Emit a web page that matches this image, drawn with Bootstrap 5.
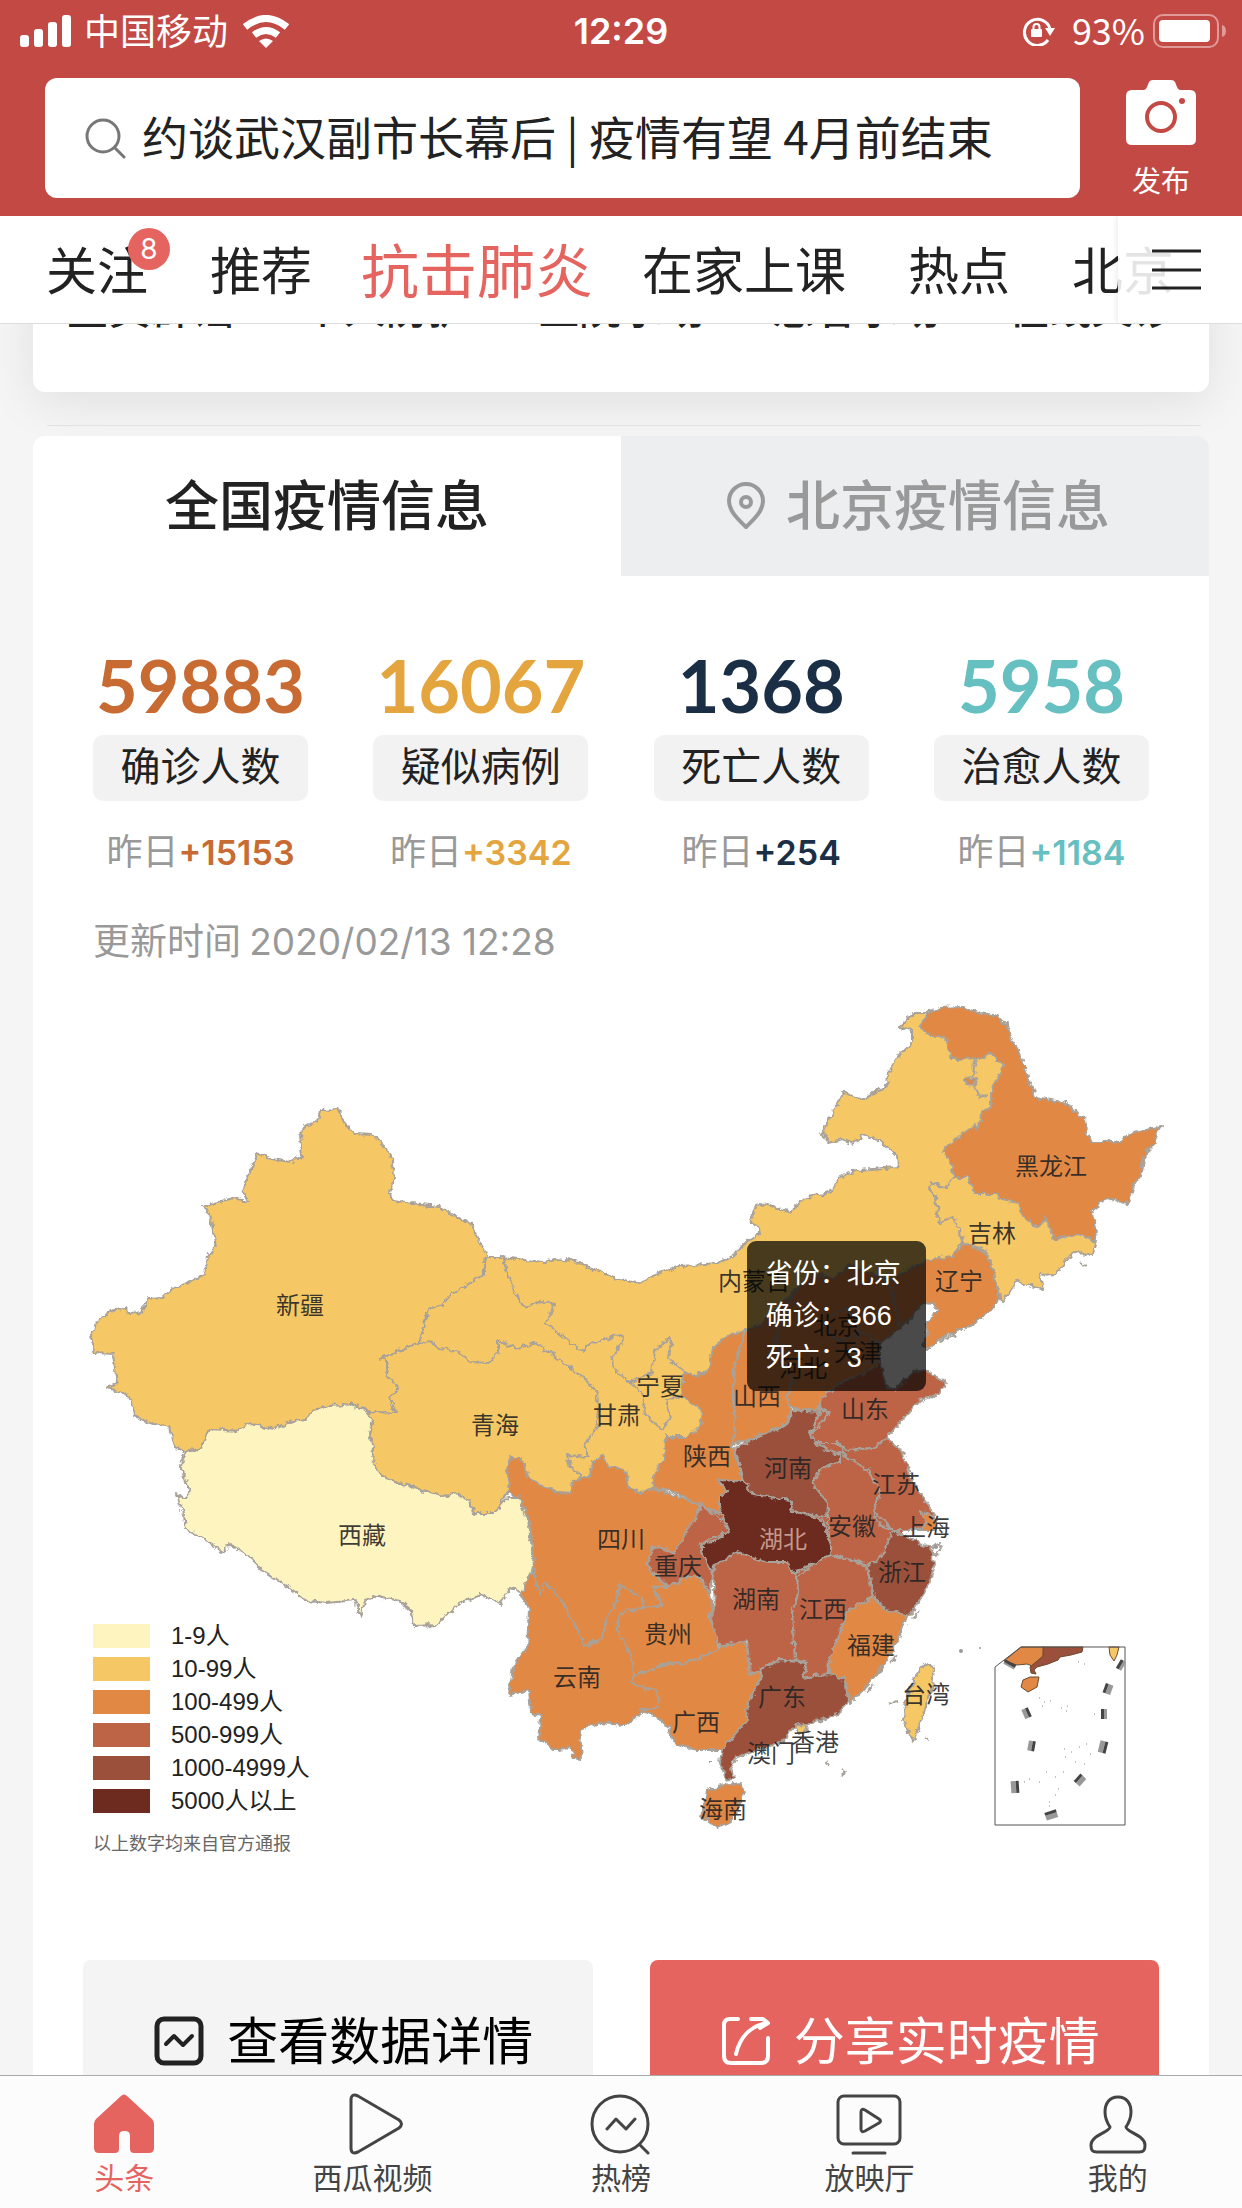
<!DOCTYPE html>
<html lang="zh-CN">
<head>
<meta charset="utf-8">
<meta name="viewport" content="width=device-width, initial-scale=1">
<title>抗击肺炎</title>
<link rel="stylesheet" href="https://cdn.jsdelivr.net/npm/bootstrap@5.3.0/dist/css/bootstrap.min.css">
<style>
  :root { --brand: #c24944; --accent: #e5645f; --ink: #222; --dim: #999; --cjk: "Noto Sans CJK SC", sans-serif; }
  body { font-family: var(--cjk); color: var(--ink); background: #f5f5f5; }
  button { font-family: inherit; }
  svg { display: block; flex: none; }
  .app { height: 100vh; }
  .topbar { background: var(--brand); }
  .statusbar { height: 62px; padding: 0 16px; font-size: 36px; line-height: 56px; }
  .statusbar span { padding-bottom: 4px; }
  .statusbar .clock { padding-bottom: 0; }
  .carrier { margin: 0 15px 0 13px; }
  .latin { font-family: Inter, sans-serif; }
  .clock { font-weight: 600; font-size: 36px; }
  .searchrow { padding: 16px 0 18px 45px; }
  .searchbox { height: 120px; border-radius: 12px; padding: 0 40px; gap: 16px; }
  .searchbox input { font-size: 46px; color: var(--ink); outline: 0; min-width: 0; padding: 0 0 5px; }
  .post { width: 162px; gap: 14px; font-size: 29px; line-height: 36px; }
  .post svg { margin-top: 1px; }
  .channels { height: 108px; border-bottom: 1px solid #dedede; }
  .channels ul { gap: 62px; padding-left: 46px; font-size: 51px; line-height: 104px; }
  .channels a { color: var(--ink); }
  .channels .current { font-size: 58px; color: var(--accent); margin: 0 -13px; }
  .count { width: 42px; height: 42px; line-height: 42px; font-size: 28px; background: var(--accent); left: 82px; top: 12px; }
  .more { width: 124px; background: rgba(255,255,255,.88); box-shadow: -2px 0 5px rgba(0,0,0,.07); padding-right: 41px; }
  .feed { padding: 0 33px; min-height: 0; }
  .panel { border-radius: 12px; }
  .shortcuts { margin-top: -48px; padding-bottom: 56px; font-size: 42px; line-height: 60px; font-weight: 500; box-shadow: 0 10px 50px rgba(0,0,0,.09); }
  .shortcuts a { color: var(--ink); flex: 1 1 0; }
  .rule { margin: 33px 8px 10px 14px; border-top: 1px solid #e2e2e2; }
  .scope button { height: 140px; font-size: 54px; font-weight: 500; color: var(--ink); padding: 0 0 7px; }
  .scope .off { background: #eceef0; color: var(--dim); gap: 20px; padding-left: 6px; }
  .scope svg { margin-top: 7px; }
  .figures { padding: 73px 60px 0; }
  .figure-cell { width: 215px; }
  .total { font: 700 72px/72px Lato, sans-serif; }
  .pill { background: #f2f2f2; border-radius: 10px; font-size: 40px; line-height: 58px; padding-bottom: 8px; margin-top: 14px; }
  .delta { font-size: 36px; line-height: 42px; margin-top: 27px; color: var(--dim); }
  .delta b { font: 600 34px/42px Inter, sans-serif; }
  .c1 { color: #c76b33; } .c2 { color: #e4a43e; } .c3 { color: #1a2f45; } .c4 { color: #66bfc0; }
  .updated { font-size: 37px; line-height: 42px; margin-top: 44px; padding-left: 60px; color: var(--dim); }
  .updated time { font-family: Inter, sans-serif; font-size: 37px; }
  .atlas text { font-family: "Noto Sans CJK SC", sans-serif; font-size: 24px; text-anchor: middle; fill: #222; fill-opacity: .88; }
  .atlas .pale { fill: #d3a99c; }
  .l1 { fill: #fdf4bf; } .l2 { fill: #f6c765; } .l3 { fill: #e18845; } .l4 { fill: #bd6447; } .l5 { fill: #9b503c; } .l6 { fill: #6c2b1e; }
  .legend { left: 60px; bottom: 6px; font: 24px/33px "Liberation Sans", "Noto Sans CJK SC", sans-serif; }
  .legend li { gap: 21px; }
  .swatch { width: 57px; height: 24px; }
  .k1 { background: #fdf4bf; } .k2 { background: #f6c765; } .k3 { background: #e18845; } .k4 { background: #bd6447; } .k5 { background: #9b503c; } .k6 { background: #6c2b1e; }
  .source { font: 18px/24px var(--cjk); color: #666; margin-top: 13px; }
  .tip { left: 60.7%; top: 31%; background: rgba(0,0,0,.71); border-radius: 9px; padding: 12px 19px; width: 179px; font: 27px/42px "Liberation Sans", "Noto Sans CJK SC", sans-serif; }
  .actions { padding: 100px 50px 0; gap: 57px; }
  .actions button { height: 162px; border-radius: 8px; font-size: 51px; flex: 1 1 0; gap: 23px; padding: 0 0 6px 12px; }
  .actions svg { margin-top: 6px; }
  .details { background: #f4f4f4; color: #000; }
  .share { background: var(--accent); }
  .tabbar { height: 133px; border-top: 1px solid #aaa; background: #fcfcfc; }
  .tabbar a { flex: 1 1 0; color: #444; font-size: 30px; line-height: 40px; padding-top: 17px; }
  .tabbar svg { margin-bottom: 1px; }
  .tabbar .here { color: var(--accent); }
</style>
<script src="https://cdn.jsdelivr.net/npm/bootstrap@5.3.0/dist/js/bootstrap.bundle.min.js"></script>
</head>
<body>
<div class="app d-flex flex-column overflow-hidden">

  <header class="topbar text-white flex-shrink-0">
    <div class="statusbar d-flex align-items-center">
      <div class="d-flex align-items-center flex-fill w-25 ps-1">
        <svg width="51" height="32" viewBox="0 0 51 32" fill="#fff"><rect y="20" width="9" height="12" rx="3"/><rect x="14" y="14" width="9" height="18" rx="3"/><rect x="28" y="7" width="9" height="25" rx="3"/><rect x="42" width="9" height="32" rx="3"/></svg>
        <span class="carrier">中国移动</span>
        <svg width="46" height="33" viewBox="0 0 46 33" fill="none" stroke="#fff" stroke-width="7"><path d="M2 12Q23-5 44 12M11 20q12-9 24 0"/><path d="M23 33l-7-7q7-5 14 0z" fill="#fff" stroke="none"/></svg>
      </div>
      <span class="clock latin">12:29</span>
      <div class="d-flex align-items-center justify-content-end flex-fill w-25">
        <svg width="34" height="30" viewBox="0 0 34 30" fill="none" stroke="#fff" stroke-width="3"><path d="M26 24A13 13 0 1 1 28 13"/><path d="M23 12h10l-5 8z" fill="#fff" stroke="none"/><rect x="9" y="13" width="11" height="8" rx="1" fill="#fff" stroke="none"/><path d="M11.500 14v-3a3 3 0 0 1 6 0v3" stroke-width="2"/></svg>
        <span class="ms-3 me-2">93%</span>
        <svg width="73" height="34" viewBox="0 0 73 34"><rect x="1" y="1" width="64" height="32" rx="9" fill="none" stroke="#e09a97" stroke-width="2"/><rect x="6" y="6" width="51" height="22" rx="4" fill="#fff"/><path d="M69 11q4 1 4 6t-4 6z" fill="#e09a97"/></svg>
      </div>
    </div>
    <div class="searchrow d-flex">
      <label class="searchbox bg-white d-flex align-items-center flex-fill">
        <svg width="41" height="41" viewBox="0 0 41 41" fill="none" stroke="#777" stroke-width="3" stroke-linecap="round"><circle cx="18" cy="18" r="16"/><path d="M30 30l9 9"/></svg>
        <input class="border-0 flex-fill bg-transparent" type="text" aria-label="搜索" value="约谈武汉副市长幕后 | 疫情有望 4月前结束">
      </label>
      <button class="post btn p-0 border-0 text-white d-flex flex-column align-items-center" type="button">
        <svg width="70" height="68" viewBox="0 0 70 68"><path d="M6 11h12q2 0 3-3l2-5q1-2 4-2h18q3 0 4 2l2 5q1 3 3 3h10q6 0 6 6v43q0 6-6 6H6q-6 0-6-6V17q0-6 6-6z" fill="#fff"/><circle cx="35" cy="38" r="14" fill="none" stroke="#c24944" stroke-width="4"/><circle cx="56" cy="22" r="3" fill="#c24944"/></svg>
        <span>发布</span>
      </button>
    </div>
  </header>

  <nav class="channels bg-white position-relative overflow-hidden flex-shrink-0">
    <ul class="list-unstyled d-flex text-nowrap m-0">
      <li class="position-relative"><a class="text-decoration-none" href="#">关注</a><span class="count position-absolute rounded-circle text-white text-center latin">8</span></li>
      <li><a class="text-decoration-none" href="#">推荐</a></li>
      <li class="current"><a class="text-decoration-none text-reset" href="#">抗击肺炎</a></li>
      <li><a class="text-decoration-none" href="#">在家上课</a></li>
      <li><a class="text-decoration-none" href="#">热点</a></li>
      <li><a class="text-decoration-none" href="#">北京</a></li>
    </ul>
    <button class="more btn border-0 rounded-0 position-absolute top-0 end-0 h-100 d-flex align-items-center justify-content-end" type="button" aria-label="全部频道">
      <svg width="49" height="41" viewBox="0 0 49 41" stroke="#222" stroke-width="3"><path d="M0 2h49M0 21h49M0 39h49"/></svg>
    </button>
  </nav>

  <main class="feed flex-fill overflow-hidden">
    <div class="shortcuts panel bg-white d-flex text-center">
      <a class="text-decoration-none" href="#">鉴真辟谣</a><a class="text-decoration-none" href="#">个人防护</a><a class="text-decoration-none" href="#">医院求助</a><a class="text-decoration-none" href="#">患者求助</a><a class="text-decoration-none" href="#">在线义诊</a>
    </div>
    <div class="rule"></div>

    <section class="panel bg-white overflow-hidden">
      <div class="scope d-flex">
        <button class="btn border-0 rounded-0 w-50" type="button">全国疫情信息</button>
        <button class="off btn border-0 rounded-0 w-50 d-flex align-items-center justify-content-center" type="button">
          <svg width="40" height="48" viewBox="0 0 40 48" fill="none" stroke="#999" stroke-width="4"><path d="M20 45C14 39 3 30 3 19a17 17 0 0 1 34 0c0 11-11 20-17 26z" stroke-linejoin="round"/><circle cx="20" cy="20" r="5"/></svg>
          北京疫情信息
        </button>
      </div>

      <div class="figures d-flex justify-content-between text-center">
        <div class="figure-cell"><div class="total c1">59883</div><div class="pill">确诊人数</div><div class="delta">昨日<b class="c1">+15153</b></div></div>
        <div class="figure-cell"><div class="total c2">16067</div><div class="pill">疑似病例</div><div class="delta">昨日<b class="c2">+3342</b></div></div>
        <div class="figure-cell"><div class="total c3">1368</div><div class="pill">死亡人数</div><div class="delta">昨日<b class="c3">+254</b></div></div>
        <div class="figure-cell"><div class="total c4">5958</div><div class="pill">治愈人数</div><div class="delta">昨日<b class="c4">+1184</b></div></div>
      </div>
      <div class="updated">更新时间 <time datetime="2020-02-13T12:28">2020/02/13 12:28</time></div>

      <div class="position-relative">
        <svg class="atlas w-100 h-auto" viewBox="33 963 1176 897" role="img" aria-label="全国疫情地图">
          <defs>
            <filter id="coast" filterUnits="userSpaceOnUse" x="33" y="963" width="1176" height="897" color-interpolation-filters="sRGB">
              <feTurbulence type="fractalNoise" baseFrequency="0.16" numOctaves="3" seed="4"/>
              <feDisplacementMap in="SourceGraphic" scale="7" xChannelSelector="R" yChannelSelector="G"/>
            </filter>
          </defs>
          <g stroke="#a8a29a" stroke-width="2" stroke-linejoin="round" filter="url(#coast)">
            <!-- Inner Mongolia, Gansu and Ningxia share one tone -->
            <path class="l2" d="M489 1257L500 1257 543 1262 557 1259 580 1262 588 1268 600 1272 620 1279 639 1284 653 1276 680 1266 718 1263 735 1255 745 1243 759 1234 758 1229 751 1220 755 1206 768 1204 789 1212 807 1197 830 1193 840 1177 858 1170 898 1167 897 1157 880 1140 863 1135 853 1143 843 1139 828 1143 822 1133 843 1093 863 1099 887 1086 888 1073 902 1052 912 1042 912 1030 900 1027 913 1013 930 1013 960 1045 995 1040 1015 1070 1000 1120 960 1180 980 1240 940 1262 800 1380 700 1440 660 1500 560 1485 440 1347 418 1344 423 1330 428 1309 443 1305 447 1297 463 1287 483 1275 483 1262Z"/>
            <path class="l2" d="M320 1110L338 1109 343 1121 355 1134 373 1135 383 1144 393 1160 394 1182 389 1192 393 1201 413 1204 440 1207 465 1222 472 1223 477 1238 489 1257 483 1262 483 1275 463 1287 447 1297 443 1305 428 1309 423 1330 418 1344 393 1353 379 1359 387 1360 387 1375 399 1389 390 1398 396 1413 368 1412 353 1404 332 1406 313 1410 307 1419 290 1422 273 1429 250 1423 237 1431 210 1429 200 1449 185 1452 173 1446 169 1427 150 1423 135 1416 132 1400 123 1392 107 1388 117 1383 113 1354 95 1353 91 1336 97 1321 113 1310 127 1309 130 1314 142 1312 147 1298 163 1297 173 1289 205 1274 208 1255 216 1248 210 1214 202 1207 233 1198 248 1201 243 1191 257 1153 273 1159 290 1162 302 1156 300 1135 304 1126 318 1122Z"/>
            <path class="l2" d="M418 1344L430 1341 437 1347 460 1353 470 1362 490 1363 498 1353 498 1341 518 1348 535 1343 553 1355 567 1365 583 1377 597 1393 599 1410 597 1427 585 1443 588 1457 567 1455 570 1467 582 1475 572 1482 570 1493 555 1492 540 1485 528 1477 507 1493 495 1513 473 1513 470 1502 457 1493 447 1496 420 1490 400 1483 382 1476 372 1460 373 1448 369 1434 373 1419 368 1412 396 1413 390 1398 399 1389 387 1375 387 1360 379 1359Z"/>
            <path class="l1" d="M185 1452L200 1449 210 1429 237 1431 250 1423 273 1429 290 1422 307 1419 313 1410 332 1406 353 1404 368 1412 373 1419 369 1434 373 1448 372 1460 382 1476 400 1483 420 1490 447 1496 457 1493 470 1502 473 1513 495 1513 507 1498 520 1498 528 1520 534 1563 530 1580 528 1595 510 1588 500 1604 480 1594 460 1603 450 1612 437 1625 414 1626 412 1612 400 1601 373 1595 365 1601 360 1617 355 1600 327 1603 307 1601 293 1591 278 1580 263 1571 247 1555 230 1544 223 1552 203 1538 185 1528 182 1509 176 1494 187 1498 190 1491 181 1469 182 1459Z"/>
            <path fill="none" d="M502 1257L513 1287 523 1307 543 1301 555 1305 545 1323 567 1340 582 1352 590 1343 622 1334 623 1342 612 1358 617 1373 632 1382 652 1373 655 1350 670 1337 672 1345 668 1358 685 1372M627 1380L642 1393 645 1415 663 1430 671 1417 665 1400 681 1395"/>
            <!-- ground tone below the central and eastern provinces -->
            <path class="l4" stroke="none" d="M700 1520L745 1440 820 1400 850 1400 880 1430 890 1470 905 1520 895 1580 850 1640 830 1665 760 1665 725 1600Z"/>
            <path class="l2" d="M953 1177L946 1189 930 1182 929 1188 936 1197 939 1223 953 1217 960 1230 962 1242 985 1250 993 1270 1000 1297 1001 1302 1010 1293 1017 1281 1043 1290 1040 1275 1056 1274 1072 1253 1093 1254 1096 1240 1060 1200 1000 1170Z"/>
            <path class="l3" d="M928 1013L940 1008 962 1007 980 1013 995 1015 1007 1025 1010 1037 1018 1050 1025 1068 1035 1097 1067 1103 1078 1115 1085 1117 1087 1132 1092 1142 1117 1142 1130 1133 1162 1126 1157 1133 1156 1143 1145 1153 1142 1173 1133 1187 1128 1204 1107 1198 1092 1209 1096 1227 1095 1242 1078 1233 1055 1239 1045 1218 1038 1227 1022 1215 1019 1202 1000 1199 997 1194 975 1194 968 1177 953 1177 952 1165 943 1151 957 1138 975 1124 978 1130 982 1112 991 1108 991 1090 1004 1067 991 1052 980 1058 953 1059 948 1052 945 1037 930 1035 920 1028Z"/>
            <path fill="none" d="M975 1058L973 1077 978 1097 988 1095"/><path class="l3" d="M965 1078L976 1077 974 1086 968 1085Z"/>
            <path class="l3" d="M962 1243L985 1252 993 1270 1000 1297 993 1308 973 1325 947 1335 928 1348 923 1347 927 1333 925 1328 938 1310 933 1303 923 1302 912 1317 897 1330 885 1310 890 1280 913 1267 932 1259 953 1256Z"/>
            <path class="l3" d="M793 1293L812 1274 835 1277 850 1266 868 1272 890 1282 900 1328 880 1343 880 1363 860 1377 840 1385 820 1405 817 1412 790 1408 787 1397 793 1380 775 1340Z"/>
            <path class="l3" d="M830 1316l16-8 12 10-2 16-16 8-12-8z"/><path class="l3" d="M858 1332l12 4 10 10-4 16-16 2-6-16z"/>
            <path class="l3" d="M745 1330L735 1362 733 1393 735 1427 732 1445 763 1435 787 1423 790 1407 787 1397 793 1380 775 1340 793 1293 760 1325Z"/>
            <path class="l3" d="M745 1330L730 1335 713 1348 707 1372 692 1376 685 1372 681 1385 683 1397 702 1410 700 1428 687 1437 665 1437 664 1460 652 1477 653 1487 673 1492 700 1505 717 1513 740 1510 743 1481 738 1463 732 1445 735 1427 733 1393 735 1362Z"/>
            <path class="l3" d="M529 1577L521 1595 529 1610 527 1648 513 1667 509 1695 529 1690 531 1713 542 1715 538 1737 554 1750 570 1747 574 1758 582 1759 580 1730 599 1723 625 1725 644 1712 658 1707 690 1690 690 1640 660 1590 540 1560Z"/>
            <path class="l3" d="M620 1613L643 1608 662 1605 653 1588 667 1585 687 1577 700 1577 710 1595 714 1610 708 1617 717 1630 718 1650 683 1665 670 1662 633 1677 632 1657 617 1630Z"/>
            <path class="l3" d="M512 1457L522 1460 528 1477 540 1485 555 1492 570 1493 573 1480 590 1477 592 1463 602 1455 607 1465 625 1470 630 1490 640 1493 653 1488 700 1505 697 1517 685 1533 675 1553 653 1546 647 1565 667 1585 652 1588 662 1605 643 1608 642 1598 620 1585 617 1600 607 1617 603 1638 585 1646 563 1603 545 1582 540 1595 535 1577 534 1563 530 1523 520 1498 507 1493 509 1480 507 1467Z"/>
            <path class="l3" d="M633 1677L655 1668 673 1664 690 1662 717 1650 743 1638 750 1660 762 1675 748 1703 747 1720 723 1750 697 1750 677 1745 667 1727 658 1716 640 1710 658 1707 658 1692 631 1683Z"/>
            <path class="l4" d="M700 1505L728 1523 727 1533 700 1543 707 1563 712 1573 710 1595 700 1577 687 1577 667 1587 647 1565 655 1546 675 1553 685 1533 697 1517Z"/>
            <path class="l4" d="M713 1567L737 1552 753 1555 767 1562 787 1560 797 1577 798 1593 792 1613 795 1660 780 1660 763 1668 750 1675 747 1640 720 1647 715 1633 710 1617 715 1607Z"/>
            <path class="l4" d="M797 1577L817 1562 832 1555 853 1560 867 1567 873 1597 848 1610 840 1633 830 1657 827 1675 803 1678 807 1663 795 1660 792 1613 798 1593Z"/>
            <path class="l4" d="M840 1383L860 1375 880 1363 887 1387 895 1390 913 1372 925 1370 947 1383 937 1395 920 1400 900 1422 887 1438 873 1448 847 1452 837 1443 813 1443 810 1435 830 1413 818 1408 822 1398Z"/>
            <path class="l4" d="M837 1442L847 1450 873 1448 887 1438 903 1452 913 1483 927 1503 935 1517 930 1530 893 1530 873 1510 880 1493 868 1470 848 1458Z"/>
            <path class="l5" d="M792 1410L820 1412 810 1435 817 1445 840 1455 840 1462 823 1467 812 1483 822 1495 828 1503 827 1517 793 1512 790 1500 753 1495 743 1481 735 1448 763 1435 787 1425Z"/>
            <path class="l4" d="M823 1467L840 1462 840 1453 848 1458 868 1470 880 1493 873 1510 877 1523 893 1530 887 1550 873 1565 853 1560 832 1555 828 1530 828 1503 812 1483Z"/>
            <path class="l6" d="M718 1480L743 1481 753 1495 790 1500 793 1512 823 1520 832 1553 817 1562 793 1573 787 1562 767 1562 737 1552 715 1565 712 1572 702 1553 702 1543 715 1542 728 1532 720 1507 720 1495 728 1492Z"/>
            <path class="l5" d="M893 1530L913 1540 930 1547 935 1563 928 1587 910 1615 885 1610 873 1593 867 1567 880 1558 888 1543Z"/>
            <path class="l3" d="M920 1511L935 1519 936 1530 918 1530 926 1523Z"/>
            <path class="l3" d="M873 1597L885 1610 908 1615 893 1650 880 1670 863 1690 850 1703 845 1680 830 1673 830 1657 840 1633 848 1610Z"/>
            <path class="l5" d="M763 1668L780 1660 807 1663 803 1678 830 1673 845 1680 848 1700 840 1713 810 1723 790 1730 786 1740 767 1747 737 1757 730 1767 735 1778 727 1780 720 1763 723 1748 747 1720 748 1703 760 1680Z"/>
            <path class="l2" d="M795 1726l10-2 2 6-10 4z"/>
            <path class="l3" d="M707 1790L725 1785 740 1783 744 1793 738 1808 730 1822 718 1828 702 1817Z"/>
            <path class="l2" d="M927 1663L934 1668 932 1690 920 1723 914 1742 902 1720 907 1697 917 1673Z"/>
            <path fill="none" d="M930 1550l8-6 4 4-6 8zM940 1342l14-8 2 4M912 1618l8-8M890 1665l6-10M866 1693l8-8M732 1762l6-2M826 1761l4 4M842 1770l4 3-4 2M890 1703l6-2M925 1738l4 1M708 1761h3M1080 1262l6 4"/>
          </g>
          <g fill="#999"><circle cx="961" cy="1651" r="2"/><circle cx="980" cy="1648" r="1"/><circle cx="936" cy="1547" r="2"/><circle cx="940" cy="1543" r="1"/></g>

          <!-- South China Sea inset -->
          <g stroke="#6b4a2e" stroke-width="1">
            <path class="l3" d="M1004 1661L1021 1647H1044L1043 1657 1032 1666 1027 1664 1017 1665Z"/>
            <path class="l5" d="M1043 1647H1083L1082 1652 1071 1655 1060 1657 1058 1660 1048 1664 1037 1667 1034 1670 1036 1674 1031 1673 1030 1667 1043 1656Z"/>
            <path class="l3" d="M1023 1680L1030 1677 1039 1677 1037 1687 1028 1692 1021 1687Z"/>
            <path class="l2" d="M1109 1647H1119L1117 1655 1114 1661 1110 1655Z"/>
          </g>
          <path d="M995 1667L1021 1647H1125V1825H995Z" fill="none" stroke="#555" stroke-width="1"/>
          <g fill="#999"><path d="M-1-5h4V5h-4z" transform="translate(1121 1665) rotate(30)"/><path d="M-1-5h5V5h-5z" transform="translate(1108 1689) rotate(20)"/><path d="M-1-5h4V5h-4z" transform="translate(1104 1714)"/><path d="M-4-6h5V6h-5z" transform="translate(1103 1747) rotate(14)"/><path d="M-1-5h5V5h-5z" transform="translate(1080 1780) rotate(42)"/><path d="M0-6h5V6h-5z" transform="translate(1051 1814) rotate(72)"/><path d="M-5-6h5V6h-5z" transform="translate(1016 1787) rotate(-4)"/><path d="M-4-5h4V5h-4z" transform="translate(1032 1746) rotate(10)"/><path d="M-4-5h4V5h-4z" transform="translate(1027 1713) rotate(-24)"/><path d="M0-6h3V6h-3z" transform="translate(1010 1664) rotate(118)"/></g>
          <g fill="#444"><path d="M-3-5h3V5h-3z" transform="translate(1121 1665) rotate(30)"/><path d="M-4-5h3V5h-3z" transform="translate(1108 1689) rotate(20)"/><path d="M-3-5h3V5h-3z" transform="translate(1104 1714)"/><path d="M1-6h3V6h-3z" transform="translate(1103 1747) rotate(14)"/><path d="M-4-5h3V5h-3z" transform="translate(1080 1780) rotate(42)"/><path d="M-3-6h3V6h-3z" transform="translate(1051 1814) rotate(72)"/><path d="M0-6h3V6h-3z" transform="translate(1016 1787) rotate(-4)"/><path d="M0-5h3V5h-3z" transform="translate(1032 1746) rotate(10)"/><path d="M0-5h3V5h-3z" transform="translate(1027 1713) rotate(-24)"/><path d="M-2-6h3V6h-3z" transform="translate(1010 1664) rotate(118)"/></g>
          <path d="M1039 1698h1M1044 1702h1M1050 1701h1M1042 1706h1M1061 1708h1M1067 1706h1M1066 1711h1M1094 1714h1M1078 1662h1M1084 1664h1M1064 1749h1M1071 1752h1M1079 1747h1M1086 1744h1M1065 1757h1M1075 1762h1M1084 1764h1M1090 1754h1M1046 1772h1M1055 1777h1M1063 1772h1M1029 1779h1M1024 1782h1M1039 1782h1M1058 1789h1M1055 1795h1M1049 1802h1M1049 1806h1" stroke="#888"/>

          <g>
            <text x="300" y="1314">新疆</text><text x="362" y="1544">西藏</text><text x="495" y="1434">青海</text><text x="617" y="1424">甘肃</text><text x="660" y="1395">宁夏</text><text x="754" y="1290">内蒙古</text><text x="837" y="1334">北京</text><text x="858" y="1361">天津</text><text x="803" y="1377">河北</text><text x="757" y="1405">山西</text><text x="707" y="1465">陕西</text><text x="788" y="1477">河南</text><text x="621" y="1548">四川</text><text x="678" y="1575">重庆</text><text class="pale" x="783" y="1548">湖北</text><text x="756" y="1608">湖南</text><text x="668" y="1643">贵州</text><text x="577" y="1686">云南</text><text x="696" y="1731">广西</text><text x="782" y="1706">广东</text><text x="723" y="1818">海南</text><text x="771" y="1762">澳门</text><text x="815" y="1751">香港</text><text x="926" y="1703">台湾</text><text x="871" y="1654">福建</text><text x="823" y="1618">江西</text><text x="902" y="1581">浙江</text><text x="926" y="1536">上海</text><text x="852" y="1535">安徽</text><text x="896" y="1493">江苏</text><text x="865" y="1418">山东</text><text x="959" y="1290">辽宁</text><text x="992" y="1242">吉林</text><text x="1051" y="1175">黑龙江</text>
          </g>
        </svg>

        <div class="legend position-absolute">
          <ul class="list-unstyled m-0">
            <li class="d-flex align-items-center"><span class="swatch k1"></span>1-9人</li>
            <li class="d-flex align-items-center"><span class="swatch k2"></span>10-99人</li>
            <li class="d-flex align-items-center"><span class="swatch k3"></span>100-499人</li>
            <li class="d-flex align-items-center"><span class="swatch k4"></span>500-999人</li>
            <li class="d-flex align-items-center"><span class="swatch k5"></span>1000-4999人</li>
            <li class="d-flex align-items-center"><span class="swatch k6"></span>5000人以上</li>
          </ul>
          <div class="source">以上数字均来自官方通报</div>
        </div>

        <div class="tip position-absolute text-white text-nowrap">
          <div>省份：北京</div><div>确诊：366</div><div>死亡：3</div>
        </div>
      </div>

      <div class="actions d-flex">
        <button class="details btn border-0 d-flex align-items-center justify-content-center" type="button">
          <svg width="50" height="50" viewBox="0 0 50 50" fill="none" stroke="#222" stroke-width="5" stroke-linejoin="round" stroke-linecap="round"><rect x="3" y="3" width="44" height="44" rx="7"/><path d="M12 28l8-8 9 9 9-9" stroke-width="4"/></svg>
          查看数据详情
        </button>
        <button class="share btn border-0 text-white d-flex align-items-center justify-content-center" type="button">
          <svg width="50" height="50" viewBox="0 0 50 50" fill="none" stroke="#fff" stroke-width="4" stroke-linecap="round" stroke-linejoin="round"><path d="M17 3H9Q3 3 3 9v31q0 7 7 7h30q7 0 7-7V22"/><path d="M30 3h12l5 4-8 5M45 7C28 11 19 21 15 38"/></svg>
          分享实时疫情
        </button>
      </div>
    </section>
  </main>

  <nav class="tabbar d-flex flex-shrink-0">
    <a class="here d-flex flex-column align-items-center text-decoration-none" href="#">
      <svg width="66" height="62" viewBox="0 0 66 62" fill="currentColor"><path d="M30 3q3-3 6 0l25 23q2 2 2 5v24q0 5-5 5H43q-4 0-4-4V43q0-5-5-5h-1q-5 0-5 5v13q0 4-4 4H8q-5 0-5-5V31q0-3 2-5z"/></svg>头条</a>
    <a class="d-flex flex-column align-items-center text-decoration-none" href="#">
      <svg width="66" height="62" viewBox="0 0 66 62" fill="none" stroke="currentColor" stroke-width="3"><path d="M11 7q0-7 7-4l41 24q5 4 0 8L18 59q-7 3-7-4z"/></svg>西瓜视频</a>
    <a class="d-flex flex-column align-items-center text-decoration-none" href="#">
      <svg width="66" height="62" viewBox="0 0 66 62" fill="none" stroke="currentColor" stroke-width="3" stroke-linecap="round" stroke-linejoin="round"><circle cx="32" cy="31" r="28"/><path d="M19 36l9-10 10 10 9-10M52 52l8 8"/></svg>热榜</a>
    <a class="d-flex flex-column align-items-center text-decoration-none" href="#">
      <svg width="66" height="62" viewBox="0 0 66 62" fill="none" stroke="currentColor" stroke-width="3" stroke-linecap="round" stroke-linejoin="round"><rect x="2" y="3" width="62" height="48" rx="6"/><path d="M25 19q0-4 4-2l14 9q3 2 0 4l-14 8q-4 2-4-2zM17 60h32"/></svg>放映厅</a>
    <a class="d-flex flex-column align-items-center text-decoration-none" href="#">
      <svg width="66" height="62" viewBox="0 0 66 62" fill="none" stroke="currentColor" stroke-width="3"><path d="M33 4c9 0 13 7 13 15 0 7-3 12-5 15 0 5 19 8 19 18 0 5-1 7-6 7H12c-5 0-6-2-6-7 0-10 19-13 19-18-2-3-5-8-5-15C20 11 24 4 33 4z"/></svg>我的</a>
  </nav>
</div>
</body>
</html>
